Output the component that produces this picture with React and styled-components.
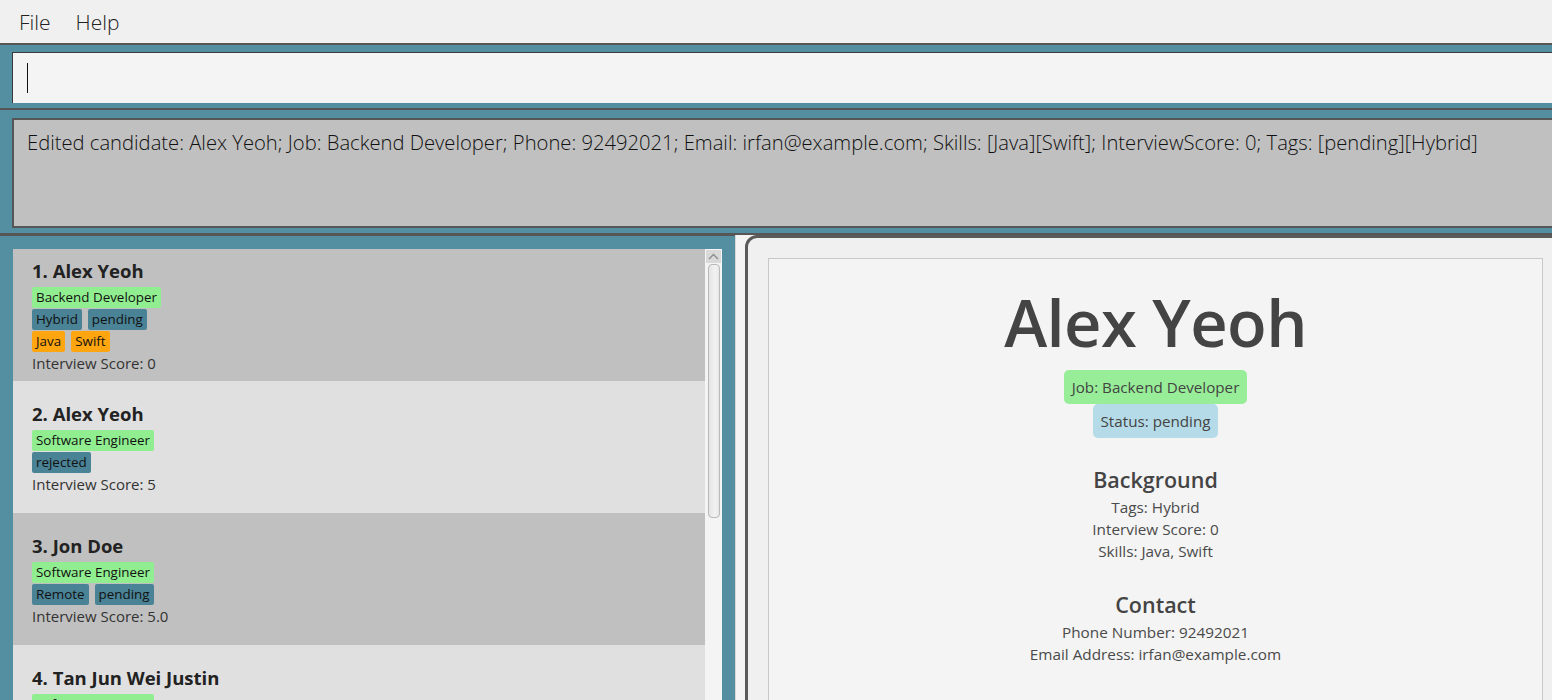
import styled, { createGlobalStyle } from "styled-components";

const GlobalStyle = createGlobalStyle`
  html, body {
    margin: 0;
    padding: 0;
    overflow: hidden;
    background: #f0f0f0;
  }
  * {
    box-sizing: border-box;
  }
`;

const TEAL = "#538fa1";
const DARK = "#565656";

const Window = styled.div`
  width: 1552px;
  height: 700px;
  display: flex;
  flex-direction: column;
  overflow: hidden;
  font-family: "Open Sans", "Noto Sans", sans-serif;
`;

const MenuBar = styled.div`
  height: 43px;
  flex: none;
  background: #f0f0f0;
  display: flex;
  align-items: center;
  padding-left: 19px;
  gap: 25px;
`;

const MenuItem = styled.span`
  font-size: 21px;
  font-weight: 300;
  color: #222;
`;

const Pane = styled.div`
  flex: none;
  background: ${TEAL};
  border-top: ${(p) => p.$line || 2}px solid ${DARK};
  padding: ${(p) => p.$pad};
  overflow: hidden;
`;

const CommandBox = styled.div`
  height: 51px;
  margin-right: -30px;
  background: #f4f4f4;
  border-top: 1px solid #3a3a3a;
  border-left: 1px solid #3a3a3a;
  display: flex;
  align-items: center;
  padding-left: 14px;
`;

const Caret = styled.div`
  width: 1px;
  height: 30px;
  background: #111;
`;

const ResultBox = styled.div`
  height: 110px;
  margin-right: -30px;
  background: #c0c0c0;
  border: 2px solid ${DARK};
  padding: 8px 13px;
  font-size: 20.2px;
  font-weight: 300;
  color: #111;
  white-space: nowrap;
`;

const Main = styled.div`
  flex: 1;
  min-height: 0;
  display: flex;
  background: ${TEAL};
  border-top: 3px solid ${DARK};
`;

const ListArea = styled.div`
  width: 735px;
  flex: none;
  padding: 13px 13px 0 13px;
  display: flex;
`;

const CardList = styled.div`
  width: 692px;
  display: flex;
  flex-direction: column;
`;

const Card = styled.div`
  height: 132px;
  flex: none;
  background: ${(p) => (p.$alt ? "#e0e0e0" : "#c0c0c0")};
  padding: 0 19px;
  display: flex;
  flex-direction: column;
  justify-content: center;
`;

const Name = styled.div`
  font-size: 18.5px;
  font-weight: 700;
  color: #222;
  line-height: 26px;
  margin-bottom: 3px;
`;

const TagRow = styled.div`
  display: flex;
  gap: 6px;
  height: 22px;
`;

const TAG_COLORS = {
  job: "#90ee90",
  tag: "#4a8296",
  skill: "#ffa50f",
};

const Tag = styled.span`
  background: ${(p) => TAG_COLORS[p.$kind]};
  color: #111;
  font-size: 13.4px;
  line-height: 21px;
  height: 21px;
  padding: 0 4px;
  border-radius: 2px;
`;

const Score = styled.div`
  font-size: 15px;
  color: #333;
  line-height: 20px;
`;

const ScrollBar = styled.div`
  width: 17px;
  background: #f4f4f4;
  display: flex;
  flex-direction: column;
  align-items: center;
  padding-top: 1px;
`;

const ScrollButton = styled.div`
  width: 15px;
  height: 13px;
  background: #d9d9d9;
  display: flex;
  align-items: center;
  justify-content: center;
`;

const Thumb = styled.div`
  width: 12px;
  height: 254px;
  margin-top: 1px;
  border: 1px solid #b9b9b9;
  border-radius: 4px;
  background: linear-gradient(to right, #e4e4e4, #f2f2f2 60%, #e8e8e8);
`;

const DetailPane = styled.div`
  flex: 1;
  min-width: 0;
  background: #f4f4f4;
  border-left: 1px solid #d8d8d8;
  padding-left: 9px;
  margin-top: -1px;
  overflow: hidden;
`;

const DetailCard = styled.div`
  margin-right: -14px;
  height: 520px;
  border: 3px solid #5a5a5a;
  border-radius: 12px;
  background: #f0f0f0;
  padding: 20px;
`;

const DetailInner = styled.div`
  height: 100%;
  border: 1px solid #c8c8c8;
  border-bottom: none;
  background: #f4f4f4;
  display: flex;
  flex-direction: column;
  align-items: center;
  padding-top: 23px;
  color: #454545;
`;

const BigName = styled.div`
  font-size: 65px;
  font-weight: 600;
  line-height: 80px;
  color: #444;
  letter-spacing: -0.6px;
`;

const Pill = styled.div`
  margin-top: ${(p) => p.$top || 0}px;
  background: ${(p) => p.$bg};
  border-radius: 5px;
  height: 34px;
  line-height: 34px;
  padding: 0 8px;
  font-size: 15.2px;
  color: #444;
`;

const Heading = styled.div`
  margin-top: ${(p) => p.$top}px;
  font-size: 21.5px;
  font-weight: 600;
  line-height: 32px;
  color: #444;
`;

const Line = styled.div`
  font-size: 15.3px;
  line-height: 22px;
  color: #4a4a4a;
`;

const candidates = [
  {
    name: "Alex Yeoh",
    job: "Backend Developer",
    tags: ["Hybrid", "pending"],
    skills: ["Java", "Swift"],
    score: "0",
  },
  {
    name: "Alex Yeoh",
    job: "Software Engineer",
    tags: ["rejected"],
    skills: [],
    score: "5",
  },
  {
    name: "Jon Doe",
    job: "Software Engineer",
    tags: ["Remote", "pending"],
    skills: [],
    score: "5.0",
  },
  {
    name: "Tan Jun Wei Justin",
    job: "Software Engineer",
    tags: ["Remote"],
    skills: [],
    score: "3",
  },
];

const CandidateCard = ({ index, c }) => (
  <Card $alt={index % 2 === 1}>
    <Name>
      {index + 1}.&nbsp;{c.name}
    </Name>
    <TagRow>
      <Tag $kind="job">{c.job}</Tag>
    </TagRow>
    <TagRow>
      {c.tags.map((t) => (
        <Tag key={t} $kind="tag">
          {t}
        </Tag>
      ))}
    </TagRow>
    {c.skills.length > 0 && (
      <TagRow>
        {c.skills.map((s) => (
          <Tag key={s} $kind="skill">
            {s}
          </Tag>
        ))}
      </TagRow>
    )}
    <Score>Interview Score: {c.score}</Score>
  </Card>
);

const App = () => {
  return (
    <Window>
      <GlobalStyle />
      <MenuBar>
        <MenuItem>File</MenuItem>
        <MenuItem>Help</MenuItem>
      </MenuBar>
      <Pane $pad="7px 0 5px 12px">
        <CommandBox>
          <Caret />
        </CommandBox>
      </Pane>
      <Pane $pad="8px 0 5px 12px">
        <ResultBox>
          Edited candidate: Alex Yeoh; Job: Backend Developer; Phone: 92492021; Email:
          irfan@example.com; Skills: [Java][Swift]; InterviewScore: 0; Tags: [pending][Hybrid]
        </ResultBox>
      </Pane>
      <Main>
        <ListArea>
          <CardList>
            {candidates.map((c, i) => (
              <CandidateCard key={i} index={i} c={c} />
            ))}
          </CardList>
          <ScrollBar>
            <ScrollButton>
              <svg width="11" height="7" viewBox="0 0 11 7">
                <path d="M1 6 L5.5 1.5 L10 6" fill="none" stroke="#8a8a8a" strokeWidth="1.3" />
              </svg>
            </ScrollButton>
            <Thumb />
          </ScrollBar>
        </ListArea>
        <DetailPane>
          <DetailCard>
            <DetailInner>
              <BigName>Alex Yeoh</BigName>
              <Pill $top={8} $bg="#98ee98">
                Job: Backend Developer
              </Pill>
              <Pill $bg="#b4dbe7">Status: pending</Pill>
              <Heading $top={26}>Background</Heading>
              <Line>Tags: Hybrid</Line>
              <Line>Interview Score: 0</Line>
              <Line>Skills: Java, Swift</Line>
              <Heading $top={27}>Contact</Heading>
              <Line>Phone Number: 92492021</Line>
              <Line>Email Address: irfan@example.com</Line>
            </DetailInner>
          </DetailCard>
        </DetailPane>
      </Main>
    </Window>
  );
};

export default App;
